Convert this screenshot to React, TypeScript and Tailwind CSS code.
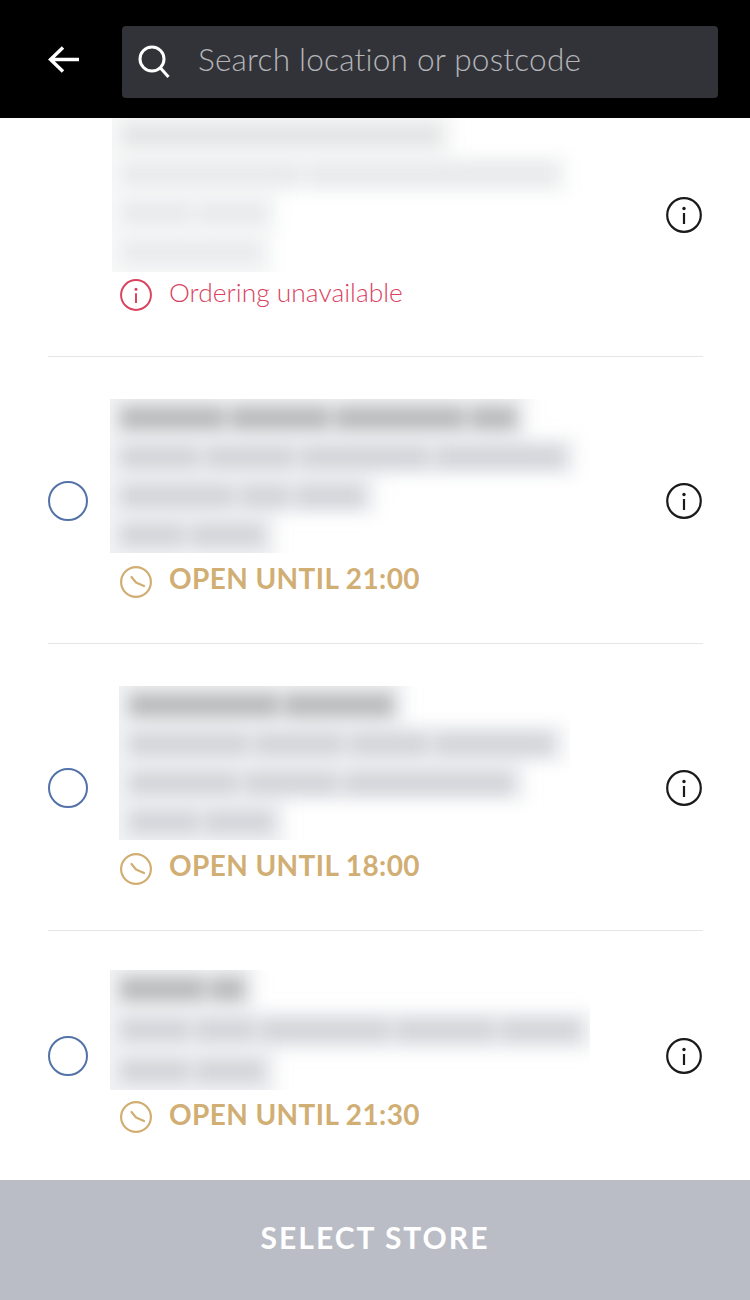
const stores = [
  {
    hours: null,
    rowClass: "h-[285px] -mt-[46px] pt-[2px]",
    contentClass: "pb-[4px]",
    blurClass: "h-[156px] w-[470px] ml-[-8px]",
    lineClass: "py-[7.5px] first:pt-[21.5px] last:pb-[21.5px]",
    tint: "bg-[#f6f7f7]",
    lines: [
      { color: "bg-[#e4e5e6]", words: [320] },
      { color: "bg-[#e9eaec]", words: [180, 250] },
      { color: "bg-[#e9eaec]", words: [70, 70] },
      { color: "bg-[#eaebed]", words: [140] },
    ],
  },
  {
    hours: "OPEN UNTIL 21:00",
    rowClass: "h-[287px] pt-[1px]",
    contentClass: "pb-[4px]",
    blurClass: "h-[154px] w-[480px] ml-[-10px]",
    lineClass: "py-[7.5px] first:pt-[21.5px] last:pb-[21.5px]",
    tint: "bg-[#f0f1f3]",
    lines: [
      { color: "bg-[#b9bbbc]", words: [105, 100, 130, 47] },
      { color: "bg-[#d3d5da]", words: [80, 90, 130, 130] },
      { color: "bg-[#d3d5da]", words: [115, 50, 70] },
      { color: "bg-[#d3d5da]", words: [65, 75] },
    ],
  },
  {
    hours: "OPEN UNTIL 18:00",
    rowClass: "h-[287px] pt-[1px]",
    contentClass: "pb-[4px]",
    blurClass: "h-[154px] w-[451px] ml-[-1px]",
    lineClass: "py-[7.5px] first:pt-[21.5px] last:pb-[21.5px]",
    tint: "bg-[#f0f1f3]",
    lines: [
      { color: "bg-[#b9bbbc]", words: [150, 110] },
      { color: "bg-[#d3d5da]", words: [120, 90, 80, 120] },
      { color: "bg-[#d3d5da]", words: [110, 95, 170] },
      { color: "bg-[#d3d5da]", words: [70, 70] },
    ],
  },
  {
    hours: "OPEN UNTIL 21:30",
    rowClass: "h-[250px]",
    contentClass: "pb-[9px]",
    blurClass: "h-[120px] w-[480px] ml-[-10px]",
    lineClass: "py-[8.5px] first:pt-[22.5px] last:pb-[22.5px]",
    tint: "bg-[#f0f1f3]",
    lines: [
      { color: "bg-[#b9bbbc]", words: [85, 35] },
      { color: "bg-[#d3d5da]", words: [70, 60, 130, 100, 81] },
      { color: "bg-[#d3d5da]", words: [70, 70] },
    ],
  },
];

function InfoIcon({ size = 36, color = "#1a1a1a" }: { size?: number; color?: string }) {
  return (
    <svg width={size} height={size} viewBox="0 0 36 36" fill="none" className="shrink-0">
      <circle cx="18" cy="18" r="16.8" stroke={color} strokeWidth="2.2" />
      <circle cx="18" cy="11.5" r="1.7" fill={color} />
      <path d="M18 16v11" stroke={color} strokeWidth="2.2" />
    </svg>
  );
}

function ClockIcon() {
  return (
    <svg width="32" height="32" viewBox="0 0 32 32" fill="none" className="shrink-0">
      <circle cx="16" cy="16" r="14.9" stroke="#d1ae73" strokeWidth="2.2" />
      <path d="M11.5 11l4.5 5.500 8 3.500" stroke="#d1ae73" strokeWidth="2.2" strokeLinecap="round" strokeLinejoin="round" />
    </svg>
  );
}

// the address text is blurred out in the picture, so it's just bars under a blur
function BlurBlock({ store }: { store: (typeof stores)[number] }) {
  return (
    <div className={`flex flex-col justify-center overflow-hidden bg-white ${store.blurClass}`}>
      <div className="-ml-[14px] flex shrink-0 flex-col blur-[8px]">
        {store.lines.map((line, i) => (
          <div key={i} className={`flex w-fit gap-[5px] pl-[24px] pr-[12px] ${store.lineClass} ${store.tint}`}>
            {line.words.map((w, j) => (
              <div key={j} className={`h-[24px] ${line.color}`} style={{ width: w }} />
            ))}
          </div>
        ))}
      </div>
    </div>
  );
}

export default function App() {
  return (
    <div className="flex h-[1300px] w-[750px] flex-col overflow-hidden bg-white font-['Lato',sans-serif]">
      <header className="flex h-[118px] shrink-0 items-start bg-black pl-[48px] pr-[32px] pt-[26px]">
        <svg width="32" height="72" viewBox="0 0 32 72" fill="none" className="shrink-0">
          <path d="M31 33.500H3M15 21.500L2.500 33.500L15 45.500" stroke="#fff" strokeWidth="3.400" />
        </svg>
        <div className="ml-[42px] flex h-[72px] flex-1 items-center rounded-[4px] bg-[#323338] pl-[16px]">
          <svg width="32" height="34" viewBox="0 0 32 34" fill="none" className="shrink-0">
            <circle cx="14" cy="14" r="12" stroke="#fff" strokeWidth="3" />
            <path d="M22.500 23L30.500 32" stroke="#fff" strokeWidth="3" />
          </svg>
          <span className="ml-[28px] pb-[4px] text-[31.6px] font-light leading-none tracking-[0.2px] text-[#b4b5b8]">
            Search location or postcode
          </span>
        </div>
      </header>

      <main className="min-h-0 flex-1 overflow-hidden">
        {stores.map((store, i) => (
          <section
            key={i}
            className={`ml-[48px] mr-[47px] flex items-center justify-between ${store.rowClass} ${i < 3 ? "border-b border-[#e6e6e6]" : ""}`}
          >
            <div className="flex items-center">
              {store.hours ? (
                <div className="h-[40px] w-[40px] shrink-0 rounded-full border-[2.500px] border-[#5272a8]" />
              ) : (
                <div className="h-[40px] w-[40px] shrink-0" />
              )}
              <div className={`ml-[32px] flex flex-col ${store.contentClass}`}>
                <BlurBlock store={store} />
                <div className={`flex h-[32px] items-center ${store.hours ? (i === 3 ? "mt-[11px]" : "mt-[13px]") : "mt-[7px]"}`}>
                  {store.hours ? <ClockIcon /> : <InfoIcon size={32} color="#d9435f" />}
                  {store.hours ? (
                    <span className={`ml-[17px] text-[28px] font-bold leading-none tracking-[0.4px] text-[#d1ae73] ${i === 3 ? "pb-[7px]" : "pb-[9px]"}`}>{store.hours}</span>
                  ) : (
                    <span className="ml-[17px] pb-[4px] text-[26.400px] font-light leading-none text-[#d9435f]">Ordering unavailable</span>
                  )}
                </div>
              </div>
            </div>
            <div className="pr-[1px]">
              <InfoIcon />
            </div>
          </section>
        ))}
      </main>

      <footer className="flex h-[120px] shrink-0 items-center justify-center bg-[#babdc6]">
        <span className="pb-[6px] text-[30px] font-bold leading-none tracking-[2px] text-white">SELECT STORE</span>
      </footer>
    </div>
  );
}
